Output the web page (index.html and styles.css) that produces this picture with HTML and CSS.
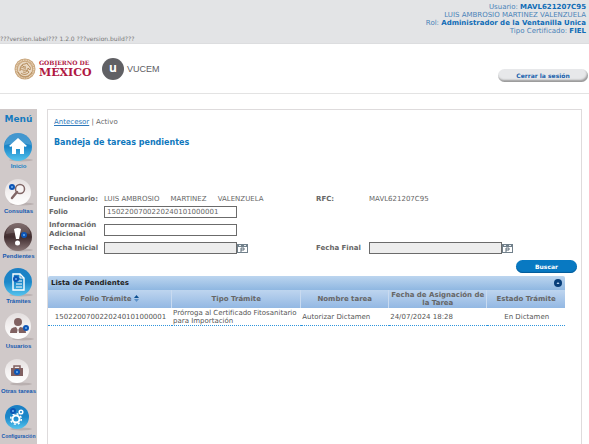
FILE: index.html
```html
<!DOCTYPE html>
<html lang="es">
<head>
<meta charset="utf-8">
<title>VUCEM - Bandeja de tareas pendientes</title>
<link rel="stylesheet" href="styles.css">
</head>
<body>
<svg class="defs" aria-hidden="true">
  <defs>
    <linearGradient id="blue" x1="0" y1="0" x2="0" y2="1"><stop offset="0" stop-color="#1c7fc4"/><stop offset=".5" stop-color="#1b87c9"/><stop offset="1" stop-color="#55c4ee"/></linearGradient>
    <linearGradient id="pale" x1="0" y1="0" x2="0" y2="1"><stop offset="0" stop-color="#e4dfdf"/><stop offset=".5" stop-color="#f4f1f1"/><stop offset="1" stop-color="#fff"/></linearGradient>
    <linearGradient id="dark" x1="0" y1="0" x2="0" y2="1"><stop offset="0" stop-color="#6b5555"/><stop offset=".5" stop-color="#3f2c2e"/><stop offset="1" stop-color="#8b7878"/></linearGradient>
    <g id="dot"><circle r="3" fill="#0d55b5"/><circle r="1" fill="#6fb2f0"/></g>
    <g id="calendar"><path d="M0 1h11v9H0z" fill="#71808b"/><path d="M1 4h9v5H1z" fill="#fff"/><path d="M4 9V5h3v2H4" fill="none" stroke="#5c6c78"/><path d="M2 2.500h2M7 2.500h2" stroke="#e8eef2"/></g>
  </defs>
</svg>
<header class="session">
  <div class="user">
    <div>Usuario: <b>MAVL621207C95</b></div>
    <div>LUIS AMBROSIO MARTINEZ VALENZUELA</div>
    <div>Rol: <b>Administrador de la Ventanilla Unica</b></div>
    <div>Tipo Certificado: <b>FIEL</b></div>
  </div>
  <div class="version">???version.label??? 1.2.0 ???version.build???</div>
</header>
<div class="brand">
  <svg class="seal" viewBox="0 0 22 22" aria-hidden="true">
    <circle cx="11" cy="11" r="10.500" fill="#c8a57b"/>
    <circle cx="11" cy="11" r="8.800" fill="none" stroke="#ead7bd" stroke-width="1.400" stroke-dasharray="1 .7"/>
    <circle cx="11" cy="11" r="7.200" fill="#e9d8c2"/>
    <path d="M6 13c0-5 2-7 5-7l2-1 1 2c2 1 3 3 2 5l-2-2c0 3-2 5-5 4M7 9c2 0 3 2 5 1M6 11c2 0 3 2 6 1M8 7c1 2 3 2 4 2M7 15c2 2 6 2 8-1M12 12l3 2" fill="none" stroke="#b68d5d"/>
    <path d="M4 14c2 4 5 5 7 5s5-1 7-5" fill="none" stroke="#b68d5d"/>
  </svg>
  <div class="gob"><span class="gob-top">GOBIERNO DE</span><span class="gob-name">MÉXICO</span></div>
  <span class="u-mark">u</span>
  <span class="vucem">VUCEM</span>
  <button class="logout" type="button">Cerrar la sesión</button>
</div>
<div class="page">
  <nav class="menu" aria-labelledby="menu-title">
    <h2 id="menu-title">Menú</h2>
    <a class="light" href="#"><svg viewBox="0 0 30 30"><ellipse cx="17" cy="28" rx="12" ry="1.500" fill="#b9b0b0"/><circle cx="14" cy="15" r="14" fill="url(#blue)"/><path d="M1 13a13 12 0 0 1 26 0q-12-4-26 0" fill="#fff" opacity=".18"/><path d="M14 6l9 8-2 1-1-1v8h-4v-5h-4v5H8v-8l-1 1-2-1z" fill="#fff"/></svg><span>Inicio</span></a>
    <a href="#"><svg viewBox="0 0 30 30"><ellipse cx="18" cy="27" rx="12" ry="1.500" fill="#b9b0b0"/><circle cx="14" cy="15" r="13" fill="url(#pale)"/><circle cx="16" cy="12" r="4.500" fill="#f7f3f3" stroke="#806565" stroke-width="1.500"/><path d="M13 15l-5 6" stroke="#806565" stroke-width="2.500" stroke-linecap="round"/><use href="#dot" x="8" y="10"/></svg><span>Consultas</span></a>
    <a href="#"><svg viewBox="0 0 30 30"><ellipse cx="17" cy="28" rx="12" ry="1.500" fill="#b9b0b0"/><circle cx="14" cy="15" r="14" fill="url(#dark)"/><path d="M2 12a12 11 0 0 1 24 0q-12-3-24 0" fill="#fff" opacity=".14"/><path d="M10 7q4-2 7 0l-2 10h-3z" fill="#fff"/><circle cx="13.500" cy="21" r="2.500" fill="#fff"/><use href="#dot" x="20" y="13"/></svg><span>Pendientes</span></a>
    <a href="#"><svg viewBox="0 0 30 30"><ellipse cx="17" cy="28" rx="12" ry="1.500" fill="#b9b0b0"/><circle cx="14" cy="15" r="14" fill="url(#blue)"/><path d="M9 7h7l4 4v12H9z" fill="none" stroke="#fff" stroke-width="1.400"/><path d="M16 7v4h4M12 14h6M12 17h6M12 20h6" fill="none" stroke="#fff"/><use href="#dot" x="12" y="12"/></svg><span>Trámites</span></a>
    <a href="#"><svg viewBox="0 0 30 30"><ellipse cx="19" cy="27" rx="11" ry="1.500" fill="#b9b0b0"/><circle cx="14" cy="14" r="13" fill="url(#pale)"/><circle cx="14" cy="10" r="4" fill="#806161"/><path d="M6 21q0-6 6-6l2 3 2-3q6 0 6 6z" fill="#806161"/><path d="M14 16l1 5h-2z" fill="#fff"/><use href="#dot" x="22" y="16"/></svg><span>Usuarios</span></a>
    <a href="#"><svg viewBox="0 0 30 30"><ellipse cx="17" cy="27" rx="11" ry="1.500" fill="#b9b0b0"/><circle cx="13" cy="14" r="12" fill="url(#pale)"/><rect x="7" y="11" width="12" height="8" fill="#805f60"/><path d="M10 11V9h6v2" fill="none" stroke="#805f60" stroke-width="1.500"/><use href="#dot" x="13" y="15"/></svg><span>Otras tareas</span></a>
    <a class="long" href="#"><svg viewBox="0 0 30 30"><ellipse cx="17" cy="27" rx="11" ry="1.500" fill="#b9b0b0"/><circle cx="13" cy="15" r="12" fill="url(#blue)"/><circle cx="12" cy="17" r="3.500" fill="none" stroke="#fff" stroke-width="2"/><circle cx="12" cy="17" r="5.300" fill="none" stroke="#fff" stroke-width="1.500" stroke-dasharray="2 2.160"/><circle cx="17" cy="10" r="1.800" fill="none" stroke="#fff" stroke-width="1.500"/><use href="#dot" x="9" y="9"/></svg><span>Configuración</span></a>
  </nav>
  <main class="content">
    <div class="crumbs"><a href="#">Antecesor</a> | Activo</div>
    <h1>Bandeja de tareas pendientes</h1>
    <form class="search">
      <div class="fields">
        <span class="label">Funcionario:</span><span class="name">LUIS AMBROSIO     MARTINEZ     VALENZUELA</span>
        <span class="label">RFC:</span><span>MAVL621207C95</span>
        <label for="folio">Folio</label><input class="wide" id="folio" type="text" value="1502200700220240101000001">
        <label class="first" for="info">Información Adicional</label><input class="wide" id="info" type="text">
        <label class="first" for="inicial">Fecha Inicial</label>
        <div class="date"><input id="inicial" type="text" readonly><button type="button" aria-label="Elegir fecha inicial"><svg viewBox="0 0 11 11"><use href="#calendar"/></svg></button></div>
        <label for="final">Fecha Final</label>
        <div class="date"><input id="final" type="text" readonly><button type="button" aria-label="Elegir fecha final"><svg viewBox="0 0 11 11"><use href="#calendar"/></svg></button></div>
      </div>
      <button class="submit" type="button">Buscar</button>
    </form>
    <section class="list">
      <div class="list-title"><h2>Lista de Pendientes</h2><button type="button" aria-label="Contraer lista"><svg viewBox="0 0 8 8"><circle cx="4" cy="4" r="4" fill="#073d78"/><path d="M2.500 5L4 3l1.500 2z" fill="#b9d4f1"/></svg></button></div>
      <table>
        <colgroup><col class="c1"><col class="c2"><col class="c3"><col class="c4"><col class="c5"></colgroup>
        <thead><tr><th>Folio Trámite <svg class="sort" viewBox="0 0 5 7"><path d="M0 3l2.500-3L5 3z" fill="#0c4e8f"/><path d="M0 4l2.500 3L5 4z" fill="#5b91c9"/></svg></th><th>Tipo Trámite</th><th>Nombre tarea</th><th>Fecha de Asignación de la Tarea</th><th>Estado Trámite</th></tr></thead>
        <tbody><tr><td class="center">1502200700220240101000001</td><td>Prórroga al Certificado Fitosanitario para Importación</td><td>Autorizar Dictamen</td><td>24/07/2024 18:28</td><td class="center">En Dictamen</td></tr></tbody>
      </table>
    </section>
  </main>
</div>
</body>
</html>
```
FILE: styles.css
```css
* { box-sizing: border-box; }
body {
  margin: 0;
  min-height: 100vh;
  display: flex;
  flex-direction: column;
  background: #fff;
  color: #666;
  font: 7px/9px "DejaVu Sans", Verdana, sans-serif;
}
h1, h2 { margin: 0; }
button, input { font: inherit; }
button { padding: 0; border: 0; cursor: pointer; }
svg { display: block; }
.defs { position: absolute; width: 0; height: 0; }

.session {
  display: flex;
  flex-direction: column;
  background: #e3e4e6;
  border-bottom: 1px solid #dcdddf;
  padding: 3px 3px 0 0;
  line-height: 8px;
}
.user { text-align: right; color: #4a83b8; }
.user b { color: #0f6cb6; }
.version { color: #777; font-size: 6px; }

.brand {
  display: flex;
  align-items: center;
  height: 50px;
  padding: 0 1px 0 14px;
  border-bottom: 1px solid #e3e3e3;
}
.seal { width: 22px; height: 22px; }
.gob {
  display: flex;
  flex-direction: column;
  margin-left: 3px;
  width: 52px;
  color: #b01843;
  font-family: "DejaVu Serif", serif;
  font-weight: bold;
  white-space: nowrap;
}
.gob-top { font-size: 6px; line-height: 8px; }
.gob-name { font-size: 11px; line-height: 12px; }
.u-mark {
  width: 22px;
  height: 22px;
  margin-left: 11px;
  border-radius: 50%;
  background: #606064;
  color: #fff;
  font: bold 12px/20px "Open Sans", sans-serif;
  text-align: center;
}
.vucem { margin-left: 3px; color: #606064; font: 9px/12px "Liberation Sans", Arial, sans-serif; }
.logout {
  width: 90px;
  height: 13px;
  margin: 14px 0 0 auto;
  border-radius: 7px;
  background: #e7e8ea;
  box-shadow: inset -1px -2px 2px #999;
  color: #155fac;
  font-weight: bold;
  font-size: 6px;
}

.page {
  flex: 1;
  display: flex;
  gap: 10px;
  padding: 15px 7px 0 0;
}
.menu {
  display: flex;
  flex-direction: column;
  flex: 0 0 37px;
  min-width: 0;
  background: #d0c9c9;
}
.menu h2 {
  color: #157abf;
  font-size: 9px;
  line-height: 12px;
  padding: 4px 0 7px;
  text-align: center;
}
.menu a {
  display: flex;
  flex-direction: column;
  align-items: center;
  height: 45px;
  color: #1559b0;
  font: bold 6px/8px "Liberation Sans", Arial, sans-serif;
  text-decoration: none;
  white-space: nowrap;
}
.menu a svg { flex: none; width: 30px; height: 30px; }
.menu .light { color: #167fc5; }
.menu .long { height: 38px; font-size: 5px; }

.content {
  flex: 1;
  min-width: 0;
  border: 1px solid #dedbdc;
  border-bottom: 0;
}
.crumbs { padding: 7px 6px 0; line-height: 10px; }
.crumbs a { color: #2d78ba; }
h1 {
  padding: 10px 6px 45px;
  color: #0f78bd;
  font-size: 8px;
  line-height: 12px;
}
.fields {
  display: grid;
  grid-template-columns: 55px 212px 53px 1fr;
  grid-template-rows: 10px 14px 20px 14px;
  align-items: center;
  padding-left: 1px;
  row-gap: 1px;
}
.label, label { font-weight: bold; }
.name { white-space: pre; }
.first { grid-column: 1; }
.fields input {
  width: 133px;
  height: 12px;
  padding: 0 2px;
  border: 1px solid #6b6b6b;
  border-radius: 0;
  background: #fff;
  color: #666;
}
.fields input[readonly] { background: #ededed; }
.date { display: flex; align-items: center; }
.date button { background: none; }
.date svg { width: 11px; height: 11px; }
.submit {
  display: block;
  width: 61px;
  height: 13px;
  margin: 5px 4px 3px auto;
  border-radius: 7px;
  background: #0879c2;
  box-shadow: inset 0 -1px 1px #045a98;
  color: #fff;
  font-weight: bold;
  font-size: 6px;
}

.list { margin-right: 16px; color: #555; }
.list-title {
  display: flex;
  justify-content: space-between;
  align-items: center;
  height: 14px;
  padding: 0 3px;
  border-radius: 2px 2px 0 0;
  background: linear-gradient(#bcd5ef, #8fb7e1);
}
.list-title h2 { color: #222; font-size: 7px; }
.list-title button { background: none; }
.list-title svg { width: 8px; height: 8px; }
table { width: 100%; table-layout: fixed; border-collapse: separate; border-spacing: 0; }
.c1 { width: 24%; }
.c2 { width: 25%; }
.c3 { width: 17%; }
.c4 { width: 19%; }
th {
  height: 18px;
  padding: 0;
  background: linear-gradient(#bed5ef, #93b8e3);
  border-right: 1px solid #c8daf0;
  color: #666;
  line-height: 8px;
}
th:last-child { border-right: 0; }
.sort { display: inline-block; width: 5px; height: 7px; vertical-align: -1px; }
td {
  height: 18px;
  padding: 0 0 0 1px;
  border-bottom: 1px dotted #2f95dc;
  line-height: 8px;
}
.center { text-align: center; }
```
